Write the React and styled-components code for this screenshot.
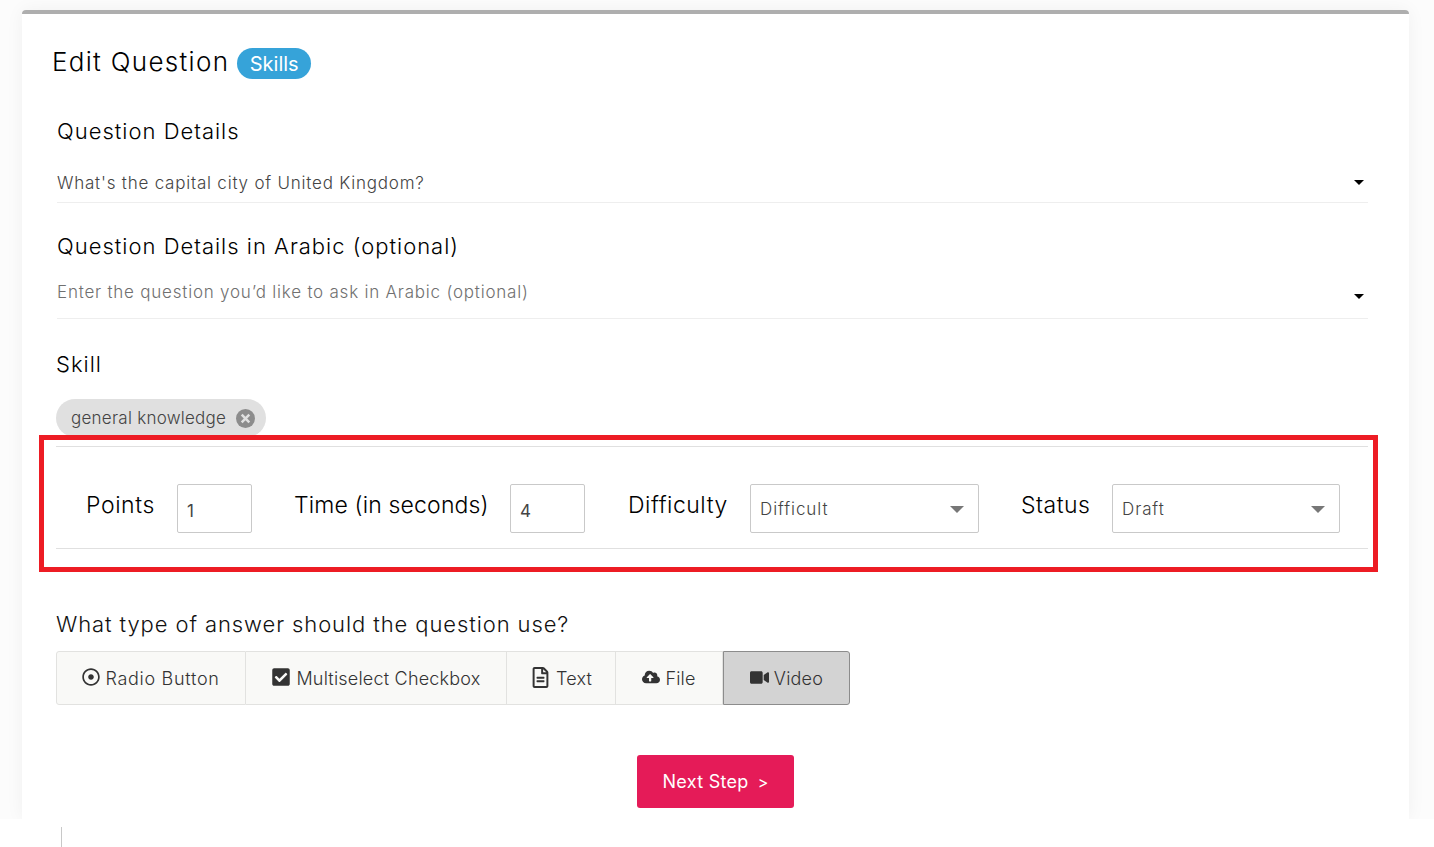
import React from "react";
import styled, { createGlobalStyle } from "styled-components";
import { FaRegDotCircle, FaCheckSquare, FaRegFileAlt, FaCloudUploadAlt, FaVideo } from "react-icons/fa";

const FONT = `Inter, "Open Sans", "Liberation Sans", sans-serif`;

const GlobalStyle = createGlobalStyle`
    html, body {
        margin: 0;
        padding: 0;
        background-color: #ffffff;
    }
    body {
        font-family: ${FONT};
        font-weight: 300;
        overflow: hidden;
    }
`;

const Page = styled.div`
    position: relative;
    width: 1434px;
    height: 847px;
    overflow: hidden;
    background-color: #ffffff;
`;

const Backdrop = styled.div`
    height: 819px;
    padding: 10px 25px 0 22px;
    box-sizing: border-box;
    overflow: hidden;
    background-color: #fcfcfc;
`;

const Card = styled.div`
    height: 809px;
    box-sizing: border-box;
    padding: 33px 41px 0 30px;
    background-color: #ffffff;
    border-top: 4px solid #aeaeae;
    border-radius: 4px 4px 0 0;
    box-shadow: 0 0 18px rgba(0, 0, 0, 0.05);
`;

const TitleRow = styled.div`
    display: flex;
    align-items: center;
    gap: 8px;
    height: 30px;
`;

const Title = styled.h1`
    margin: 0;
    font-size: 26px;
    font-weight: 300;
    line-height: 30px;
    letter-spacing: 1.3px;
    color: #000000;
`;

const Badge = styled.span`
    display: flex;
    align-items: center;
    justify-content: center;
    width: 74px;
    height: 31px;
    margin-top: 3px;
    border-radius: 16px;
    background-color: #36a3d9;
    color: #ffffff;
    font-size: 20px;
    font-weight: 400;
`;

const Section = styled.div`
    margin-left: ${(p) => p.$indent || 5}px;
    padding-top: ${(p) => p.$top || 0}px;
`;

const FieldLabel = styled.div`
    font-size: 22px;
    line-height: 28px;
    letter-spacing: 1px;
    color: #000000;
`;

const EditorLine = styled.div`
    display: flex;
    align-items: center;
    justify-content: space-between;
    height: ${(p) => p.$height}px;
    padding-top: ${(p) => p.$pad}px;
    box-sizing: border-box;
    border-bottom: 1px solid #eeeeee;
    font-size: 17px;
    letter-spacing: 0.78px;
    color: ${(p) => p.$muted ? "#707070" : "#444444"};
`;

const Caret = styled.span`
    width: 0;
    height: 0;
    margin-right: 4px;
    margin-top: ${(p) => p.$drop || 0}px;
    border-left: 5px solid transparent;
    border-right: 5px solid transparent;
    border-top: 5px solid #000000;
`;

const ChipRow = styled.div`
    padding-top: 21px;
`;

const Chip = styled.div`
    display: flex;
    align-items: center;
    gap: 10px;
    width: max-content;
    height: 38px;
    padding: 0 11px 0 15px;
    box-sizing: border-box;
    border-radius: 19px;
    background-color: #e0e0e0;
    font-size: 17px;
    letter-spacing: 0.25px;
    color: #444444;
`;

const ChipClose = styled.svg`
    width: 19px;
    height: 19px;
    display: block;
`;

const SettingsRow = styled.div`
    display: flex;
    align-items: center;
    height: 103px;
    margin-top: 9px;
    padding: 22px 0 0 30px;
    box-sizing: border-box;
    border-top: 1px solid #e0e0e0;
    border-bottom: 1px solid #e0e0e0;
`;

const SettingLabel = styled.label`
    width: ${(p) => p.$width}px;
    margin-left: ${(p) => p.$left || 0}px;
    margin-top: -8px;
    font-size: 23px;
    letter-spacing: ${(p) => p.$spacing}px;
    color: #000000;
`;

const NumberBox = styled.div`
    width: 75px;
    height: 49px;
    padding: 5px 0 0 9px;
    box-sizing: border-box;
    display: flex;
    align-items: center;
    border: 1px solid #c9c9c9;
    border-radius: 2px;
    font-size: 17px;
    font-weight: 400;
    color: #444444;
`;

const SelectBox = styled(NumberBox)`
    width: ${(p) => p.$width}px;
    padding: 1px 14px 0 9px;
    justify-content: space-between;
    font-weight: 300;
    letter-spacing: 0.9px;
`;

const SelectCaret = styled.span`
    width: 0;
    height: 0;
    border-left: 7px solid transparent;
    border-right: 7px solid transparent;
    border-top: 7px solid #777777;
`;

const Question = styled.div`
    margin-top: 61px;
    font-size: 22px;
    line-height: 28px;
    letter-spacing: 0.9px;
    color: #111111;
`;

const TypeGroup = styled.div`
    display: flex;
    width: max-content;
    margin-top: 13px;
`;

const TypeButton = styled.div`
    display: flex;
    align-items: center;
    justify-content: center;
    gap: 5px;
    width: ${(p) => p.$width}px;
    height: 54px;
    box-sizing: border-box;
    border: 1px solid ${(p) => p.$active ? "#8c8c8c" : "#e2e2e0"};
    border-left-width: ${(p) => p.$first || p.$active ? 1 : 0}px;
    border-radius: ${(p) => p.$first ? "3px 0 0 3px" : p.$active ? "0 3px 3px 0" : "0"};
    background-color: ${(p) => p.$active ? "#d3d3d3" : "#f9f9f7"};
    font-size: 18px;
    letter-spacing: ${(p) => p.$spacing}px;
    color: #333333;

    svg {
        color: #333333;
        flex-shrink: 0;
        margin-top: -2px;
    }
`;

const NextRow = styled.div`
    display: flex;
    justify-content: center;
    margin-top: 50px;
    padding-left: 11px;
`;

const NextButton = styled.button`
    width: 157px;
    height: 53px;
    border: none;
    border-radius: 3px;
    background-color: #e51b58;
    color: #ffffff;
    font-family: ${FONT};
    font-size: 18px;
    font-weight: 400;
    letter-spacing: 0.3px;
`;

const ButtonArrow = styled.span`
    margin-left: 9px;
    font-size: 16px;
`;

const Highlight = styled.div`
    position: absolute;
    left: 39px;
    top: 435px;
    width: 1339px;
    height: 137px;
    box-sizing: border-box;
    border: 5px solid #ed1c24;
    pointer-events: none;
`;

const CursorMark = styled.div`
    position: absolute;
    left: 61px;
    top: 827px;
    width: 1px;
    height: 20px;
    background-color: #c8c8c8;
`;

const answerTypes = [
    { label: "Radio Button", Icon: FaRegDotCircle, size: 18, width: 190, spacing: 0.7, first: true },
    { label: "Multiselect Checkbox", Icon: FaCheckSquare, size: 20, width: 261, spacing: 0.2 },
    { label: "Text", Icon: FaRegFileAlt, size: 21, width: 109, spacing: 0.2 },
    { label: "File", Icon: FaCloudUploadAlt, size: 18, width: 107, spacing: 0.2 },
    { label: "Video", Icon: FaVideo, size: 19, width: 127, spacing: 0.2, active: true },
];

const App = () => {
    return (
        <Page>
            <GlobalStyle />
            <Backdrop>
                <Card>
                    <TitleRow>
                        <Title>Edit Question</Title>
                        <Badge>Skills</Badge>
                    </TitleRow>
                    <Section $top={40}>
                        <FieldLabel>Question Details</FieldLabel>
                        <EditorLine $height={58} $pad={18}>
                            What's the capital city of United Kingdom?
                            <Caret />
                        </EditorLine>
                    </Section>
                    <Section $top={29}>
                        <FieldLabel>Question Details in Arabic (optional)</FieldLabel>
                        <EditorLine $muted $height={59} $pad={5}>
                            Enter the question you’d like to ask in Arabic (optional)
                            <Caret $drop={10} />
                        </EditorLine>
                    </Section>
                    <Section $indent={4} $top={31}>
                        <FieldLabel>Skill</FieldLabel>
                        <ChipRow>
                            <Chip>
                                general knowledge
                                <ChipClose viewBox="0 0 20 20">
                                    <circle cx="10" cy="10" r="10" fill="#8c8c8c" />
                                    <path d="M6 6l8 8M14 6l-8 8" stroke="#e0e0e0" strokeWidth="2.6" />
                                </ChipClose>
                            </Chip>
                        </ChipRow>
                        <SettingsRow>
                            <SettingLabel $width={91} $spacing={0.6}>Points</SettingLabel>
                            <NumberBox>1</NumberBox>
                            <SettingLabel $left={42} $width={216} $spacing={0.15}>Time (in seconds)</SettingLabel>
                            <NumberBox>4</NumberBox>
                            <SettingLabel $left={43} $width={122} $spacing={0.5}>Difficulty</SettingLabel>
                            <SelectBox $width={229}>
                                Difficult
                                <SelectCaret />
                            </SelectBox>
                            <SettingLabel $left={42} $width={91} $spacing={0.5}>Status</SettingLabel>
                            <SelectBox $width={228}>
                                Draft
                                <SelectCaret />
                            </SelectBox>
                        </SettingsRow>
                        <Question>What type of answer should the question use?</Question>
                        <TypeGroup>
                            {answerTypes.map(({ label, Icon, size, width, spacing, first, active }) => (
                                <TypeButton key={label} $width={width} $spacing={spacing} $first={first} $active={active}>
                                    <Icon size={size} />
                                    {label}
                                </TypeButton>
                            ))}
                        </TypeGroup>
                    </Section>
                    <NextRow>
                        <NextButton>Next Step<ButtonArrow>&gt;</ButtonArrow></NextButton>
                    </NextRow>
                </Card>
            </Backdrop>
            <CursorMark />
            <Highlight />
        </Page>
    );
};

export default App;
